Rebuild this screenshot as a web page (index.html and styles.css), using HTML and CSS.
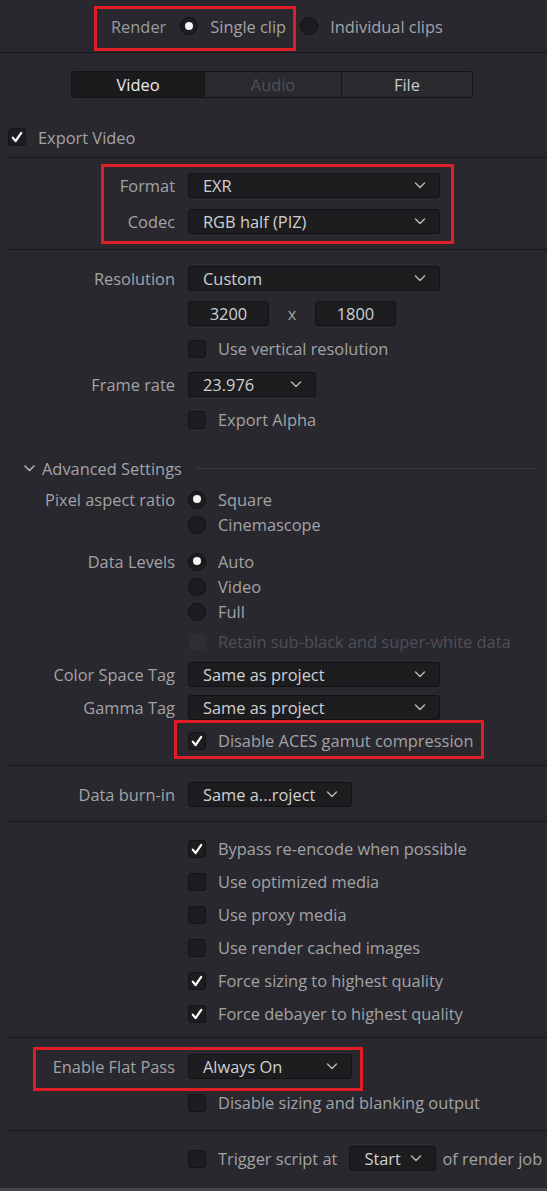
FILE: index.html
```html
<!DOCTYPE html>
<html>
<head>
<meta charset="utf-8">
<link rel="stylesheet" href="styles.css">
</head>
<body>
<div class="panel">
  <div class="topbar">
    <span class="lbl">Render</span>
    <span class="radio on"></span><span class="txt">Single clip</span>
    <span class="radio"></span><span class="txt">Individual clips</span>
  </div>

  <section class="sec sec-a">
    <div class="tabs">
      <div class="tab t1 active">Video</div>
      <div class="tab t2 dim">Audio</div>
      <div class="tab t3">File</div>
    </div>
    <div class="check-row export">
      <span class="cb"><svg viewBox="0 0 17 17"><path d="M4 9.2l3 3.6 6-8.6" /></svg></span>
      <span class="txt">Export Video</span>
    </div>
  </section>
  <div class="divider"></div>

  <section class="sec sec-b">
    <div class="row"><span class="label">Format</span><div class="dd w-lg"><span>EXR</span><svg class="chev" viewBox="0 0 11 7"><path d="M1 1l4.5 4.5L10 1"/></svg></div></div>
    <div class="row mt11"><span class="label">Codec</span><div class="dd w-lg"><span>RGB half (PIZ)</span><svg class="chev" viewBox="0 0 11 7"><path d="M1 1l4.5 4.5L10 1"/></svg></div></div>
  </section>
  <div class="divider"></div>

  <section class="sec sec-c">
    <div class="row"><span class="label">Resolution</span><div class="dd w-lg"><span>Custom</span><svg class="chev" viewBox="0 0 11 7"><path d="M1 1l4.5 4.5L10 1"/></svg></div></div>
    <div class="row mt10"><span class="label"></span><div class="dims"><div class="num">3200</div><span class="x">x</span><div class="num">1800</div></div></div>
    <div class="row mt10"><span class="label"></span><div class="opt"><span class="cb empty"></span><span class="txt">Use vertical resolution</span></div></div>
    <div class="row mt11"><span class="label">Frame rate</span><div class="dd w-sm"><span>23.976</span><svg class="chev" viewBox="0 0 11 7"><path d="M1 1l4.5 4.5L10 1"/></svg></div></div>
    <div class="row mt10"><span class="label"></span><div class="opt"><span class="cb empty"></span><span class="txt">Export Alpha</span></div></div>

    <div class="adv">
      <svg class="adv-chev" viewBox="0 0 11 7"><path d="M1 1l4.5 4.5L10 1"/></svg>
      <span class="adv-title">Advanced Settings</span>
      <span class="adv-line"></span>
    </div>

    <div class="row mt7"><span class="label">Pixel aspect ratio</span><div class="opt"><span class="radio on"></span><span class="txt">Square</span></div></div>
    <div class="row"><span class="label"></span><div class="opt"><span class="radio"></span><span class="txt">Cinemascope</span></div></div>
    <div class="row mt12"><span class="label">Data Levels</span><div class="opt"><span class="radio on"></span><span class="txt">Auto</span></div></div>
    <div class="row"><span class="label"></span><div class="opt"><span class="radio"></span><span class="txt">Video</span></div></div>
    <div class="row"><span class="label"></span><div class="opt"><span class="radio"></span><span class="txt">Full</span></div></div>
    <div class="row mt5"><span class="label"></span><div class="opt disabled"><span class="cb dis"></span><span class="txt">Retain sub-black and super-white data</span></div></div>
    <div class="row mt8"><span class="label">Color Space Tag</span><div class="dd w-lg"><span>Same as project</span><svg class="chev" viewBox="0 0 11 7"><path d="M1 1l4.5 4.5L10 1"/></svg></div></div>
    <div class="row mt8"><span class="label">Gamma Tag</span><div class="dd w-lg"><span>Same as project</span><svg class="chev" viewBox="0 0 11 7"><path d="M1 1l4.5 4.5L10 1"/></svg></div></div>
    <div class="row mt8"><span class="label"></span><div class="opt"><span class="cb"><svg viewBox="0 0 17 17"><path d="M4 9.2l3 3.6 6-8.6" /></svg></span><span class="txt">Disable ACES gamut compression</span></div></div>
  </section>
  <div class="divider"></div>

  <section class="sec sec-d">
    <div class="row"><span class="label">Data burn-in</span><div class="dd w-md"><span>Same a...roject</span><svg class="chev" viewBox="0 0 11 7"><path d="M1 1l4.5 4.5L10 1"/></svg></div></div>
  </section>
  <div class="divider"></div>

  <section class="sec sec-e">
    <div class="row"><span class="label"></span><div class="opt"><span class="cb"><svg viewBox="0 0 17 17"><path d="M4 9.2l3 3.6 6-8.6" /></svg></span><span class="txt">Bypass re-encode when possible</span></div></div>
    <div class="row mt8"><span class="label"></span><div class="opt"><span class="cb empty"></span><span class="txt">Use optimized media</span></div></div>
    <div class="row mt8"><span class="label"></span><div class="opt"><span class="cb empty"></span><span class="txt">Use proxy media</span></div></div>
    <div class="row mt8"><span class="label"></span><div class="opt"><span class="cb empty"></span><span class="txt">Use render cached images</span></div></div>
    <div class="row mt8"><span class="label"></span><div class="opt"><span class="cb"><svg viewBox="0 0 17 17"><path d="M4 9.2l3 3.6 6-8.6" /></svg></span><span class="txt">Force sizing to highest quality</span></div></div>
    <div class="row mt8"><span class="label"></span><div class="opt"><span class="cb"><svg viewBox="0 0 17 17"><path d="M4 9.2l3 3.6 6-8.6" /></svg></span><span class="txt">Force debayer to highest quality</span></div></div>
  </section>
  <div class="divider"></div>

  <section class="sec sec-f">
    <div class="row"><span class="label">Enable Flat Pass</span><div class="dd w-md"><span>Always On</span><svg class="chev" viewBox="0 0 11 7"><path d="M1 1l4.5 4.5L10 1"/></svg></div></div>
    <div class="row mt11"><span class="label"></span><div class="opt"><span class="cb empty"></span><span class="txt">Disable sizing and blanking output</span></div></div>
  </section>
  <div class="divider"></div>

  <section class="sec sec-g">
    <div class="row"><span class="label"></span><div class="opt"><span class="cb empty"></span><span class="txt">Trigger script at</span><div class="dd w-xs"><span>Start</span><svg class="chev" viewBox="0 0 11 7"><path d="M1 1l4.5 4.5L10 1"/></svg></div><span class="txt tail">of render job</span></div></div>
  </section>

  <span class="mark m1"></span>
  <span class="mark m2"></span>
  <span class="mark m3"></span>
  <span class="mark m4"></span>
</div>
</body>
</html>
```

FILE: styles.css
```css
html, body {
  margin: 0;
  padding: 0;
  background: #28282e;
}

.panel {
  position: relative;
  width: 547px;
  height: 1191px;
  box-sizing: border-box;
  overflow: hidden;
  background: #28282e;
  border-bottom: 3px solid #44444a;
  font-family: "Open Sans", "Noto Sans", sans-serif;
  font-size: 16.4px;
  color: #a3a3a6;
}

.topbar {
  display: flex;
  align-items: center;
  height: 52px;
  padding-left: 111px;
  border-bottom: 1px solid #18181b;
}
.topbar .lbl { margin-right: 14px; color: #9a9a9e; }
.topbar .radio { margin-right: 12px; }
.topbar .txt { margin-right: 14px; }

.radio {
  display: inline-block;
  position: relative;
  width: 18px;
  height: 18px;
  box-sizing: border-box;
  border-radius: 50%;
  background: #1d1d20;
  border: 1.5px solid #111113;
  flex: none;
}
.radio.on::after {
  content: "";
  position: absolute;
  left: 3.5px;
  top: 3.5px;
  width: 8px;
  height: 8px;
  border-radius: 50%;
  background: #f4f4f4;
}

.divider {
  height: 1px;
  margin-left: 8px;
  background: #18181b;
}

.sec-a { padding: 18px 0 8px; }
.tabs {
  display: flex;
  width: 402px;
  height: 27px;
  margin-left: 71px;
  box-sizing: border-box;
  border: 1px solid #141417;
  border-radius: 3px;
  overflow: hidden;
}
.tab {
  display: flex;
  align-items: center;
  justify-content: center;
  color: #cacaca;
  border-left: 1px solid #141417;
  background: #29292e;
}
.t1 { width: 132px; border-left: none; }
.t2 { width: 136px; }
.t3 { flex: 1; }
.tab.active { background: #1b1b1e; color: #eaeaea; }
.tab.dim { color: #505056; }

.check-row {
  display: flex;
  align-items: center;
  height: 24px;
}
.export { margin-top: 27px; padding-left: 8px; }
.export .cb { margin-right: 12px; }

.cb {
  display: inline-block;
  width: 18px;
  height: 18px;
  box-sizing: border-box;
  border: 1px solid #141416;
  border-radius: 3px;
  background: #1d1d20;
  flex: none;
}
.cb svg { display: block; width: 16px; height: 16px; }
.cb svg path {
  fill: none;
  stroke: #ffffff;
  stroke-width: 2.3;
  stroke-linecap: round;
  stroke-linejoin: round;
}
.cb.dis {
  background: #2e2e33;
  border-color: #2a2a2e;
}

.row {
  display: grid;
  grid-template-columns: 175px 1fr;
  column-gap: 13px;
  align-items: center;
  height: 25px;
}
.mt5 { margin-top: 5px; }
.mt7 { margin-top: 7px; }
.mt8 { margin-top: 8px; }
.mt10 { margin-top: 10px; }
.mt11 { margin-top: 11px; }
.mt12 { margin-top: 12px; }

.label {
  text-align: right;
  white-space: nowrap;
  line-height: 25px;
}
.opt {
  display: flex;
  align-items: center;
  white-space: nowrap;
}
.opt .cb, .opt .radio { margin-right: 12px; }
.opt .radio { margin-right: 12px; }
.opt.disabled .txt { color: #4f4f55; }

.dd {
  display: flex;
  align-items: center;
  justify-content: space-between;
  height: 25px;
  box-sizing: border-box;
  padding: 0 13px 0 14px;
  background: #1d1d20;
  border: 1px solid #121214;
  border-radius: 3px;
  color: #d0d0d2;
  white-space: nowrap;
}
.chev { width: 12px; height: 7px; flex: none; }
.chev path, .adv-chev path {
  fill: none;
  stroke: #b4b4b8;
  stroke-width: 1.5;
  stroke-linecap: round;
  stroke-linejoin: round;
}
.w-lg { width: 252px; }
.w-md { width: 164px; }
.w-sm { width: 128px; }
.w-xs { width: 87px; margin: 0 6px 0 12px; }

.sec-b { padding: 15px 0 15px; }

.sec-c { padding: 16px 0 12px; }

.dims { display: flex; align-items: center; }
.num {
  width: 81px;
  height: 25px;
  box-sizing: border-box;
  background: #1d1d20;
  border: 1px solid #121214;
  border-radius: 3px;
  color: #d0d0d2;
  display: flex;
  align-items: center;
  justify-content: center;
}
.x { width: 46px; text-align: center; color: #a3a3a6; }

.adv {
  display: flex;
  align-items: center;
  height: 24px;
  margin-top: 24px;
  padding-left: 24px;
}
.adv-chev { width: 11px; height: 7px; margin-right: 7px; }
.adv-title { white-space: nowrap; }
.adv-line {
  width: 340px;
  height: 1px;
  margin-left: 14px;
  background: #3a3a40;
}

.sec-d { padding: 16px 0 14px; }
.sec-e { padding: 14px 0 11px; }
.sec-f { padding: 16px 0 15px; }
.sec-g { padding: 15px 0 0; }

.mark {
  position: absolute;
  box-sizing: border-box;
  border: 3px solid #e11d26;
  pointer-events: none;
}
.m1 { left: 94px; top: 6px; width: 202px; height: 45px; }
.m2 { left: 101px; top: 164px; width: 353px; height: 80px; }
.m3 { left: 174px; top: 720px; width: 310px; height: 39px; }
.m4 { left: 33px; top: 1047px; width: 330px; height: 44px; }
```
